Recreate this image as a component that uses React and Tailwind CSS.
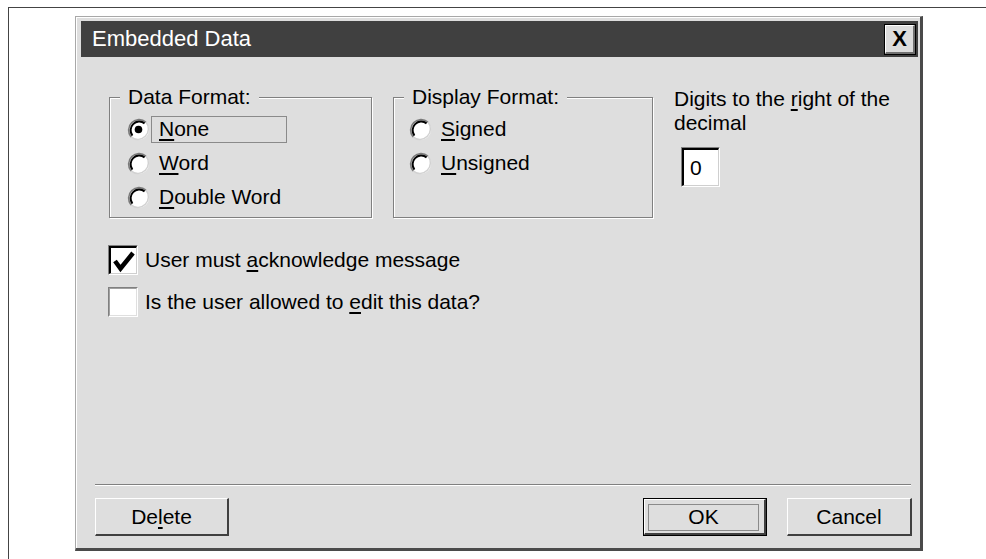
import React from "react";

const font = { fontFamily: '"Liberation Sans", Arial, sans-serif' };

// sunken radio button, dark arc on the top-left half
const Radio = ({ checked }) => (
  <svg width="23" height="23" viewBox="0 0 23 23" className="shrink-0">
    <circle cx="11.5" cy="11.5" r="10.5" fill="#fff" />
    <path d="M18.9 4.1 A10.5 10.5 0 0 1 4.1 18.9" fill="none" stroke="#d2d2d2" strokeWidth="1.5" />
    <path d="M18.9 4.1 A10.5 10.5 0 0 0 4.1 18.9" fill="none" stroke="#7a7a7a" strokeWidth="1.6" />
    <path d="M17.6 5.4 A8.7 8.7 0 0 0 5.4 17.6" fill="none" stroke="#000" strokeWidth="2" />
    {checked && <circle cx="11.5" cy="11.5" r="3.8" fill="#000" />}
  </svg>
);

const Hot = ({ children }) => <span className="underline underline-offset-[3px]">{children}</span>;

const RadioRow = ({ checked, focused, children, indent = "pl-[17px]" }) => (
  <div className={`flex h-[34px] items-center ${indent}`}>
    <Radio checked={checked} />
    <div
      className={`ml-[1px] flex h-[27px] w-[136px] items-center border pl-[7px] ${
        focused ? "border-[#8a8a8a]" : "border-transparent"
      }`}
    >
      <span className="whitespace-nowrap">{children}</span>
    </div>
  </div>
);

const Group = ({ title, width, children }) => (
  <fieldset
    className={`${width} h-[133px] border border-[#808080] shadow-[inset_1px_1px_0_#fff,1px_1px_0_#fff]`}
  >
    <legend className="ml-[10px] bg-[#dedede] px-[8px] leading-[24px]">{title}</legend>
    <div className="pt-[3px]">{children}</div>
  </fieldset>
);

const Checkbox = ({ checked }) => (
  <div className="h-[30px] w-[30px] shrink-0 border-t border-l border-r border-b border-t-[#808080] border-l-[#808080] border-r-white border-b-white">
    <div
      className={`h-full w-full bg-white ${
        checked
          ? "border-t-2 border-l-2 border-t-black border-l-black border-r border-b border-r-[#cfcfcf] border-b-[#cfcfcf]"
          : "border-t border-l border-t-[#a0a0a0] border-l-[#a0a0a0] border-r border-b border-r-[#dfdfdf] border-b-[#dfdfdf]"
      }`}
    >
      {checked && (
        <svg width="26" height="26" viewBox="0 0 26 26">
          <path d="M4 13 L9.5 20.5 L22 5" fill="none" stroke="#000" strokeWidth="4.5" strokeLinejoin="miter" />
        </svg>
      )}
    </div>
  </div>
);

const Button = ({ width, isDefault, children }) => (
  <div className={`${width} h-[38px] ${isDefault ? "border border-black" : ""}`}>
    <div className="flex h-full w-full items-center justify-center border-t border-l border-t-white border-l-white border-r-2 border-b-2 border-r-[#404040] border-b-[#404040] bg-[#dedede]">
      {isDefault ? (
        <div className="ml-[3px] mr-[5px] mt-[3px] mb-[2px] flex h-[27px] flex-1 items-center justify-center border border-[#8a8a8a]">
          {children}
        </div>
      ) : (
        children
      )}
    </div>
  </div>
);

export default function App() {
  return (
    <div className="h-[559px] w-full overflow-hidden bg-white text-[21px] leading-[24px] text-black" style={font}>
      <div className="ml-[8px] mt-[7px] h-[560px] border-t border-l border-[#444]">
        <div className="ml-[66px] mt-[8px] flex h-[535px] w-[848px] flex-col border-t border-l border-[#a8a8a8] border-r-[3px] border-b-[3px] border-r-[#4a4a4a] border-b-[#4a4a4a] bg-[#dedede] pt-[4px] pl-[5px] pr-[2px] shadow-[inset_1px_1px_0_#fff]">
          {/* title bar */}
          <div className="flex h-[36px] shrink-0 items-center justify-between bg-[#404040] pl-[11px] pr-[2px]">
            <span className="text-[22px] text-white">Embedded Data</span>
            <div className="flex h-[31px] w-[32px] items-center justify-center border border-black">
              <div className="flex h-full w-full items-center justify-center border-t border-l border-t-white border-l-white border-r-2 border-b-2 border-r-[#707070] border-b-[#707070] bg-[#dcdcdc] text-[22px] font-bold">
                X
              </div>
            </div>
          </div>

          <div className="flex flex-1 flex-col">
            {/* format groups */}
            <div className="mt-[28px] flex pl-[28px]">
              <Group title="Data Format:" width="w-[263px]">
                <RadioRow checked focused>
                  <Hot>N</Hot>one
                </RadioRow>
                <RadioRow>
                  <Hot>W</Hot>ord
                </RadioRow>
                <RadioRow>
                  <Hot>D</Hot>ouble Word
                </RadioRow>
              </Group>
              <div className="ml-[21px]">
                <Group title="Display Format:" width="w-[260px]">
                  <RadioRow indent="pl-[15px]">
                    <Hot>S</Hot>igned
                  </RadioRow>
                  <RadioRow indent="pl-[15px]">
                    <Hot>U</Hot>nsigned
                  </RadioRow>
                </Group>
              </div>
              <div className="ml-[21px] mt-[2px]">
                <div className="whitespace-nowrap">
                  Digits to the <Hot>r</Hot>ight of the
                </div>
                <div>decimal</div>
                <div className="ml-[7px] mt-[12px] h-[40px] w-[39px] border-t border-l border-t-[#808080] border-l-[#808080] border-r border-b border-r-white border-b-white">
                  <div className="flex h-full w-full items-center border-t-2 border-l-2 border-t-black border-l-black border-r border-b border-r-[#cfcfcf] border-b-[#cfcfcf] bg-white pl-[6px]">
                    0
                  </div>
                </div>
              </div>
            </div>

            {/* options */}
            <div className="mt-[21px] pl-[27px]">
              <div className="flex h-[42px] items-center gap-[7px]">
                <Checkbox checked />
                <span>
                  User must <Hot>a</Hot>cknowledge message
                </span>
              </div>
              <div className="flex h-[42px] items-center gap-[7px]">
                <Checkbox />
                <span>
                  Is the user allowed to <Hot>e</Hot>dit this data?
                </span>
              </div>
            </div>

            <div className="flex-1" />

            {/* footer */}
            <div className="ml-[14px] mr-[7px] h-[2px] border-t border-b border-t-[#808080] border-b-white" />
            <div className="mb-[12px] ml-[14px] mr-[6px] mt-[12px] flex items-center">
              <Button width="w-[134px]">
                De<Hot>l</Hot>ete
              </Button>
              <div className="flex-1" />
              <Button width="w-[124px]" isDefault>
                OK
              </Button>
              <div className="ml-[20px]">
                <Button width="w-[125px]">Cancel</Button>
              </div>
            </div>
          </div>
        </div>
      </div>
    </div>
  );
}
